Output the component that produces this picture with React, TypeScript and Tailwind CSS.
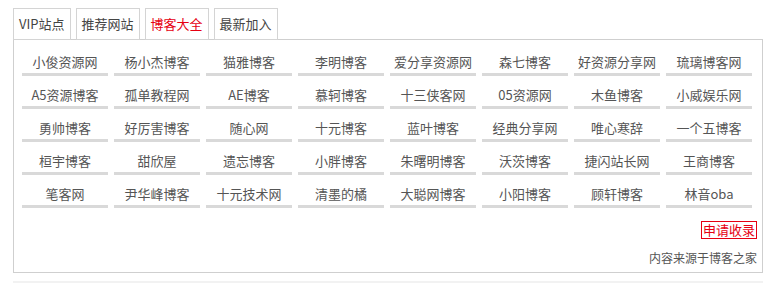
const tabs = ["VIP站点", "推荐网站", "博客大全", "最新加入"];

const sites = [
  "小俊资源网", "杨小杰博客", "猫雅博客", "李明博客", "爱分享资源网", "森七博客", "好资源分享网", "琉璃博客网",
  "A5资源博客", "孤单教程网", "AE博客", "慕轲博客", "十三侠客网", "05资源网", "木鱼博客", "小威娱乐网",
  "勇帅博客", "好厉害博客", "随心网", "十元博客", "蓝叶博客", "经典分享网", "唯心寒辞", "一个五博客",
  "桓宇博客", "甜欣屋", "遗忘博客", "小胖博客", "朱曙明博客", "沃茨博客", "捷闪站长网", "王商博客",
  "笔客网", "尹华峰博客", "十元技术网", "清墨的橘", "大聪网博客", "小阳博客", "顾轩博客", "林音oba",
];

export default function App() {
  return (
    <div
      className="w-[771px] h-[283px] bg-white overflow-hidden pl-[13px] pt-[8px]"
      style={{ fontFamily: '"Microsoft YaHei", "Noto Sans CJK SC", sans-serif' }}
    >
      <div className="w-[750px]">
        <div className="flex gap-[5px] h-[31px]">
          {tabs.map((t, i) => (
            <div
              key={t}
              className={
                "h-[32px] px-[5px] border border-[#d4d4d4] bg-white flex items-center text-[13px] " +
                (i === 2 ? "text-[#e60012]" : "text-[#444]")
              }
            >
              {t}
            </div>
          ))}
        </div>
        <div className="border border-[#cfcfcf] h-[234px] pt-[11px] pl-[8px] pr-[5px]">
          <div className="grid grid-cols-[repeat(8,86px)] gap-x-[6px] gap-y-[8px]">
            {sites.map((s) => (
              <div
                key={s}
                className="h-[25px] leading-[22px] text-center text-[13px] text-[#555] border-b-[3px] border-[#d9d9d9]"
              >
                {s}
              </div>
            ))}
          </div>
          <div className="flex justify-end mt-[13px]">
            <span className="h-[18px] px-[1px] border border-[#e60012] text-[#e60012] text-[13px] leading-[16px]">
              申请收录
            </span>
          </div>
          <div className="text-right text-[12px] text-[#555] mt-[11px] leading-[16px]">
            内容来源于博客之家
          </div>
        </div>
        <div className="mt-[8px] h-[4px] bg-[#f2f2f2]" />
      </div>
    </div>
  );
}
